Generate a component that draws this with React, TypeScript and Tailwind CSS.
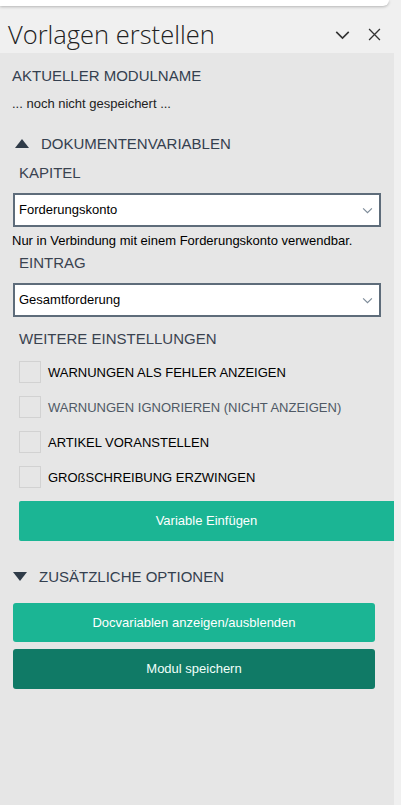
import { useState } from 'react';

function Chevron({ className }: { className?: string }) {
  return (
    <svg viewBox="0 0 12 8" className={className} fill="none" stroke="currentColor" strokeWidth="1.3">
      <path d="M1 1.5l5 5 5-5" />
    </svg>
  );
}

function SelectBox({ value }: { value: string }) {
  return (
    <div className="mx-[13px] flex h-[34px] items-center justify-between border-2 border-[#5e6c7a] bg-white pl-[4px] pr-[6px]">
      <span className="text-[13px] text-black">{value}</span>
      <Chevron className="h-[7px] w-[11px] text-[#7d8b99]" />
    </div>
  );
}

const options = [
  { label: 'WARNUNGEN ALS FEHLER ANZEIGEN', muted: false },
  { label: 'WARNUNGEN IGNORIEREN (NICHT ANZEIGEN)', muted: true },
  { label: 'ARTIKEL VORANSTELLEN', muted: false },
  { label: 'GROßSCHREIBUNG ERZWINGEN', muted: false },
];

export default function App() {
  const [checked, setChecked] = useState<boolean[]>([false, false, false, false]);

  return (
    <div className="flex h-[805px] w-[401px] flex-col overflow-hidden bg-[#f0f0f0] font-['Liberation_Sans',Arial,sans-serif]">
      {/* top strip of host window */}
      <div className="h-[6px] w-[389px] rounded-br-[6px] bg-white shadow-[0_1px_3px_rgba(0,0,0,0.25)]" />

      {/* header */}
      <div className="flex h-[47px] items-center justify-between pl-[8px] pr-[20px] pt-[10px]">
        <h1 className="font-['Open_Sans',sans-serif] text-[25.5px] font-light leading-none text-[#222]">
          Vorlagen erstellen
        </h1>
        <div className="flex items-center gap-[17px] text-[#333]">
          <Chevron className="h-[10px] w-[17px]" />
          <svg viewBox="0 0 12 12" className="h-[13px] w-[13px]" fill="none" stroke="currentColor" strokeWidth="1.2">
            <path d="M1 1l10 10M11 1L1 11" />
          </svg>
        </div>
      </div>

      {/* panel */}
      <div className="mr-[7px] flex flex-1 flex-col bg-[#e6e6e6]">
        <div className="px-[12px] pt-[15px] text-[15px] leading-none text-[#34404f]">AKTUELLER MODULNAME</div>
        <div className="px-[12px] pt-[14px] text-[13px] leading-none text-[#222]">... noch nicht gespeichert ...</div>

        <div className="flex items-center gap-[12px] pl-[15px] pt-[26px] text-[15px] leading-none text-[#34404f]">
          <svg viewBox="0 0 14 9" className="h-[9px] w-[14px] fill-[#2f3b48]">
            <path d="M7 0l7 9H0z" />
          </svg>
          <span>DOKUMENTENVARIABLEN</span>
        </div>

        <div className="px-[19px] pt-[14px] text-[15px] leading-none text-[#3a4350]">KAPITEL</div>
        <div className="pt-[13px]">
          <SelectBox value="Forderungskonto" />
        </div>
        <div className="px-[12px] pt-[7px] text-[13px] leading-none text-black">
          Nur in Verbindung mit einem Forderungskonto verwendbar.
        </div>

        <div className="px-[19px] pt-[8px] text-[15px] leading-none text-[#3a4350]">EINTRAG</div>
        <div className="pt-[13px]">
          <SelectBox value="Gesamtforderung" />
        </div>

        <div className="px-[19px] pt-[14px] text-[15px] leading-none text-[#3a4350]">WEITERE EINSTELLUNGEN</div>

        <div className="flex flex-col gap-[13px] pl-[19px] pt-[15px]">
          {options.map((o, i) => (
            <label key={o.label} className="flex cursor-pointer items-center gap-[7px]">
              <button
                type="button"
                onClick={() => setChecked((c) => c.map((v, j) => (j === i ? !v : v)))}
                className="h-[22px] w-[22px] border border-[#d2d2d2] bg-[#e6e6e6]"
              >
                {checked[i] && (
                  <svg viewBox="0 0 12 12" className="h-full w-full" fill="none" stroke="#107a66" strokeWidth="1.6">
                    <path d="M2.5 6.5l2.5 2.5 4.5-5.5" />
                  </svg>
                )}
              </button>
              <span className={`text-[13px] leading-none ${o.muted ? 'text-[#4f5965]' : 'text-black'}`}>{o.label}</span>
            </label>
          ))}
        </div>

        <div className="pl-[19px] pt-[13px]">
          <button type="button" className="flex h-[40px] w-full items-center justify-center rounded-l-[2px] bg-[#1bb594] text-[13px] text-white">
            Variable Einfügen
          </button>
        </div>

        <div className="flex items-center gap-[12px] pl-[13px] pt-[28px] text-[15px] leading-none text-[#34404f]">
          <svg viewBox="0 0 14 9" className="h-[9px] w-[14px] fill-[#2f3b48]">
            <path d="M0 0h14L7 9z" />
          </svg>
          <span>ZUSÄTZLICHE OPTIONEN</span>
        </div>

        <div className="flex flex-col gap-[7px] px-[13px] pr-[19px] pt-[19px]">
          <button type="button" className="flex h-[39px] items-center justify-center rounded-[3px] bg-[#1bb594] text-[13px] text-white">
            Docvariablen anzeigen/ausblenden
          </button>
          <button type="button" className="flex h-[40px] items-center justify-center rounded-[3px] bg-[#107a66] text-[13px] text-[#f0fffa]">
            Modul speichern
          </button>
        </div>
      </div>
    </div>
  );
}
